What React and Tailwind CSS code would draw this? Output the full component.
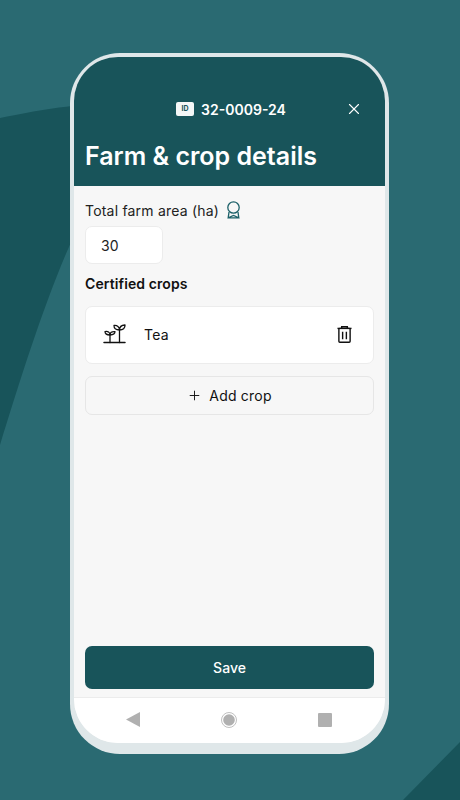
import React from "react";
import { X, Plus } from "lucide-react";

const Sprout = () => (
  <svg width="24" height="22" viewBox="0 0 24 22" fill="none" stroke="#111" strokeWidth="1.3" strokeLinecap="round" strokeLinejoin="round">
    <path d="M1 19.5h21" strokeWidth="1.5" />
    <path d="M7 19.5v-7.5" />
    <path d="M7 12c-3.5 0-5-1-5-3.4 2.8-.6 5 .6 5 3.4zM7 12c0-2.300 1.600-3.700 5-3.400 0 2.400-1.800 3.400-5 3.400z" />
    <path d="M16.500 19.500V7" />
    <path d="M16.500 7c-3.500 0-5.500-1.500-5.500-4.500 3.200-.4 5.500 1.300 5.500 4.500zM16.500 7c0-2.800 1.800-4.800 5.500-5 .2 3.200-2 5-5.500 5z" />
  </svg>
);

const Ribbon = () => (
  <svg width="15" height="18" viewBox="0 0 14 18" fill="none" stroke="#1d6169" strokeWidth="1.300">
    <circle cx="7" cy="6.500" r="5.700" />
    <path d="M2.500 11l-.8 5.800 5.300-2.300 5.300 2.300-.8-5.800M1.700 16.800h10.600" />
  </svg>
);

const TrashIcon = () => (
  <svg width="15" height="17" viewBox="0 0 16 18" fill="none" stroke="#111" strokeWidth="1.500">
    <path d="M0.500 2.500h15" />
    <path d="M5 2.500V.8h6v1.700" />
    <rect x="2" y="2.500" width="12" height="14.700" rx="1" />
    <path d="M6 6v8M10 6v8" />
  </svg>
);

export default function App() {
  return (
    <div className="relative w-[460px] h-[800px] overflow-hidden bg-[#2a6a72] font-['Inter',sans-serif]">
      <svg className="absolute inset-0" width="460" height="800" viewBox="0 0 460 800">
        <path d="M0 118 C 40 110 60 106 120 102 L 120 200 L 72 240 C 45 300 20 380 0 445 Z" fill="#18545a" />
        <path d="M403 800 L460 742 L460 800 Z" fill="#18545a" />
      </svg>
      <div className="absolute left-[70px] top-[53px] w-[319px] h-[701px] rounded-[50px] bg-[#dfe7e9] pt-[4px] px-[4px] pb-[11px]">
        <div className="w-full h-full rounded-[44px] overflow-hidden flex flex-col bg-[#f7f7f7]">
          <div className="h-[129px] shrink-0 bg-[#18545a] flex flex-col px-[11px]">
            <div className="relative mt-[43px] h-[18px] flex items-center justify-center pl-[3px]">
              <span className="bg-[#f4f7f7] rounded-[2px] w-[18px] h-[14px] flex items-center justify-center text-[7px] font-bold text-[#18545a] mr-[7px]">ID</span>
              <span className="text-white text-[14px] font-semibold tracking-[0px]">32-0009-24</span>
              <X className="absolute right-[11px] top-0 text-white" size={18} strokeWidth={1.500} />
            </div>
            <h1 className="mt-[22px] text-white text-[25px] leading-[32px] font-semibold tracking-[0px]">Farm &amp; crop details</h1>
          </div>
          <div className="flex-1 flex flex-col px-[11px]">
            <div className="mt-[14px] h-[20px] flex items-center gap-[7px] text-[14px] text-[#222] tracking-[0.2px]">
              <span>Total farm area (ha)</span>
              <Ribbon />
            </div>
            <div className="mt-[6px] w-[78px] h-[38px] bg-white rounded-[7px] border border-[#ececec] flex items-center pl-[15px] text-[14px] text-[#222]">30</div>
            <div className="mt-[9px] h-[20px] flex items-center text-[14px] font-semibold text-[#111] tracking-[0.1px]">Certified crops</div>
            <div className="mt-[13px] h-[58px] bg-white rounded-[7px] border border-[#ececec] flex items-center pl-[17px] pr-[21px] pb-[2px]">
              <Sprout />
              <span className="ml-[17px] text-[14px] text-[#111] tracking-[0.3px]">Tea</span>
              <span className="ml-auto flex"><TrashIcon /></span>
            </div>
            <div className="mt-[12px] h-[39px] rounded-[7px] border border-[#e6e6e6] flex items-center justify-center gap-[7px] text-[14px] font-normal text-[#111]">
              <Plus size={15} strokeWidth={1.500} />
              <span className="tracking-[0.2px]">Add crop</span>
            </div>
            <div className="mt-auto mb-[8px] h-[43px] rounded-[7px] bg-[#18545a] flex items-center justify-center text-white text-[14px] font-medium">Save</div>
          </div>
          <div className="h-[46px] shrink-0 bg-white border-t border-[#ececec] flex items-center justify-between pl-[52px] pr-[53px] pb-[2px]">
            <svg width="14" height="15" viewBox="0 0 14 15"><path d="M0 7.500L14 0v15z" fill="#b0b0b0" /></svg>
            <svg width="16" height="16" viewBox="0 0 16 16"><circle cx="8" cy="8" r="5.800" fill="#b0b0b0" /><circle cx="8" cy="8" r="7.500" fill="none" stroke="#b0b0b0" strokeWidth="0.800" /></svg>
            <span className="w-[14px] h-[14px] bg-[#b0b0b0] rounded-[1px]" />
          </div>
        </div>
      </div>
    </div>
  );
}
